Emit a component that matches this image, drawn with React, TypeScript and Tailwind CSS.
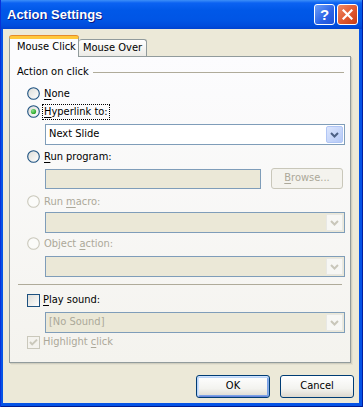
import React from "react";

function Radio({ checked = false, disabled = false }: { checked?: boolean; disabled?: boolean }) {
  return (
    <svg width="13" height="13" viewBox="0 0 13 13" className="shrink-0">
      <defs>
        <linearGradient id="rfill" x1="0" y1="0" x2="1" y2="1">
          <stop offset="0" stopColor="#DCDCD7" />
          <stop offset="1" stopColor="#FFFFFF" />
        </linearGradient>
        <radialGradient id="rdot" cx="0.35" cy="0.35" r="0.7">
          <stop offset="0" stopColor="#8BE28B" />
          <stop offset="1" stopColor="#21A121" />
        </radialGradient>
      </defs>
      <circle cx="6.5" cy="6.5" r="5.8" fill={disabled ? "#FBFBF9" : "url(#rfill)"} stroke={disabled ? "#CAC8BB" : "#1C5180"} strokeWidth="1.1" />
      {checked && <circle cx="6.5" cy="6.5" r="2.6" fill="url(#rdot)" />}
    </svg>
  );
}

function Check({ checked = false, disabled = false }: { checked?: boolean; disabled?: boolean }) {
  return (
    <svg width="13" height="13" viewBox="0 0 13 13" className="shrink-0">
      <defs>
        <linearGradient id="cfill" x1="0" y1="0" x2="1" y2="1">
          <stop offset="0" stopColor="#DCDCD7" />
          <stop offset="1" stopColor="#FFFFFF" />
        </linearGradient>
      </defs>
      <rect x="0.5" y="0.5" width="12" height="12" fill={disabled ? "#F4F3EE" : "url(#cfill)"} stroke={disabled ? "#CAC8BB" : "#1C5180"} />
      {checked && (
        <path d="M3 6 L5.2 8.4 L10 3.6" fill="none" stroke={disabled ? "#CAC8BB" : "#21A121"} strokeWidth="2" />
      )}
    </svg>
  );
}

function Chevron({ disabled = false }: { disabled?: boolean }) {
  return (
    <svg width="9" height="6" viewBox="0 0 9 6">
      <path d="M1 1 L4.5 4.5 L8 1" fill="none" stroke={disabled ? "#C9C7BA" : "#4D6185"} strokeWidth="2" />
    </svg>
  );
}

function Combo({ text, disabled = false }: { text?: string; disabled?: boolean }) {
  return (
    <div
      className={
        "flex h-[21px] items-center border border-[#7F9DB9] " +
        (disabled ? "bg-[#EBE8D7]" : "bg-white")
      }
    >
      <div className={"flex-1 pl-[3px] text-[11px] " + (disabled ? "text-[#ACA899]" : "text-black")}>{text}</div>
      {disabled ? (
        <div className="m-[1px] flex h-[17px] w-[17px] items-center justify-center rounded-[1px] border border-[#E8E8E4] bg-[#F7F7F4]">
          <Chevron disabled />
        </div>
      ) : (
        <div className="m-[1px] flex h-[17px] w-[17px] items-center justify-center rounded-[2px] border border-[#B1C6F5] bg-[linear-gradient(135deg,#DCE6FD,#B5C9F7)]">
          <Chevron />
        </div>
      )}
    </div>
  );
}

function U({ children }: { children: React.ReactNode }) {
  return <span className="underline underline-offset-[2px]">{children}</span>;
}

function RadioRow({
  checked,
  disabled,
  focus,
  children,
  className,
}: {
  checked?: boolean;
  disabled?: boolean;
  focus?: boolean;
  children: React.ReactNode;
  className?: string;
}) {
  return (
    <div className={"flex h-[13px] items-center pl-[17px] " + (className ?? "")}>
      <Radio checked={checked} disabled={disabled} />
      <span
        className={
          "ml-[2px] flex h-[16px] items-center border px-[1px] text-[11px] leading-none " +
          (focus ? "border-dotted border-black " : "border-transparent ") +
          (disabled ? "text-[#ACA899]" : "text-black")
        }
      >
        <span className="whitespace-pre">{children}</span>
      </span>
    </div>
  );
}

export default function App() {
  return (
    <div className="flex h-[407px] w-[363px] flex-col font-['DejaVu_Sans_Condensed','Liberation_Sans',sans-serif] text-[11px]">
      {/* Title bar */}
      <div className="flex h-[29px] shrink-0 items-center bg-[linear-gradient(to_bottom,#3D8FF8_0px,#0B62F2_3px,#0058E8_10px,#0055E5_20px,#004CDC_26px,#0042CF_29px)] pl-[7px] pr-[5px] shadow-[inset_1px_0_0_#0831D9,inset_-1px_0_0_#001EA0]">
        <div className="flex-1 pt-[1px] font-['Liberation_Sans',sans-serif] text-[13px] font-bold text-white [text-shadow:1px_1px_0_#0A1883]">
          Action Settings
        </div>
        <div className="flex gap-[2px]">
          <div className="flex h-[21px] w-[21px] items-center justify-center rounded-[3px] border border-white bg-[linear-gradient(135deg,#6FA0F8,#2A62E6_60%,#1E52D8)] font-['Liberation_Sans',sans-serif] text-[15px] font-bold leading-none text-white">
            ?
          </div>
          <div className="flex h-[21px] w-[21px] items-center justify-center rounded-[3px] border border-white bg-[linear-gradient(135deg,#EE8A66,#E0582F_55%,#C83C14)]">
            <svg width="11" height="11" viewBox="0 0 11 11">
              <path d="M1.5 1.5 L9.5 9.5 M9.5 1.5 L1.5 9.5" stroke="white" strokeWidth="2.2" strokeLinecap="square" />
            </svg>
          </div>
        </div>
      </div>

      {/* Frame + body */}
      <div className="flex flex-1 flex-col bg-[#0553E6] pb-[4px] pl-[3px] pr-[4px] shadow-[inset_1px_0_0_#0831D9,inset_-1px_0_0_#001EA0,inset_0_-1px_0_#001B8F]">
        <div className="flex flex-1 flex-col bg-[#ECE9D8] pl-[6px] pt-[7px]">
          {/* Tabs */}
          <div className="relative z-10 -mb-[1px] flex h-[21px] items-start">
            <div className="flex h-[21px] w-[70px] items-center rounded-t-[3px] border-x border-t-[3px] border-x-[#919B9C] border-t-[#FFC83C] bg-[#FCFCFE] pl-[7px] pb-[2px] text-black shadow-[0_-1px_0_#E68B2C]">
              Mouse Click
            </div>
            <div className="mt-[3px] flex h-[17px] w-[68px] items-center rounded-t-[3px] border-r border-t border-[#919B9C] bg-[linear-gradient(to_bottom,#FFFFFF,#ECEBE6)] pl-[4px] text-black">
              Mouse Over
            </div>
          </div>

          {/* Panel */}
          <div className="flex h-[307px] w-[342px] flex-col border border-[#919B9C] bg-[linear-gradient(to_bottom,#FCFCFE,#F4F3EE)] shadow-[1px_1px_0_#D0CEBF,2px_2px_0_#E3E0D0]">
            {/* Action on click header */}
            <div className="mt-[9px] flex h-[13px] items-center pl-[7px] pr-[6px]">
              <span className="text-black">Action on click</span>
              <div className="ml-[4px] h-[1px] flex-1 bg-[#AFAB9A]" />
            </div>

            <RadioRow className="mt-[8px]">
              <U>N</U>one
            </RadioRow>
            <RadioRow className="mt-[5px]" checked focus>
              <U>H</U>yperlink to:
            </RadioRow>
            <div className="mt-[6px] pl-[35px] pr-[5px]">
              <Combo text="Next Slide" />
            </div>

            <RadioRow className="mt-[5px]">
              <U>R</U>un program:
            </RadioRow>
            <div className="mt-[5px] flex items-center gap-[10px] pl-[35px] pr-[7px]">
              <div className="h-[20px] w-[216px] border border-[#7F9DB9] bg-[#EBE8D7]" />
              <div className="flex h-[21px] flex-1 items-center justify-center rounded-[3px] border border-[#C9C7BA] bg-[#F4F3EE] text-[#ACA899]">
                <span>
                  <U>B</U>rowse...
                </span>
              </div>
            </div>

            <RadioRow className="mt-[6px]" disabled>
              Run <U>m</U>acro:
            </RadioRow>
            <div className="mt-[4px] pl-[35px] pr-[5px]">
              <Combo disabled />
            </div>

            <RadioRow className="mt-[4px]" disabled>
              Object <U>a</U>ction:
            </RadioRow>
            <div className="mt-[6px] pl-[35px] pr-[5px]">
              <Combo disabled />
            </div>

            <div className="mx-[8px] mt-[7px] h-[1px] bg-[#AFAB9A]" />

            <div className="mt-[9px] flex h-[13px] items-center pl-[17px]">
              <Check />
              <span className="ml-[3px] text-black">
                <U>P</U>lay sound:
              </span>
            </div>
            <div className="mt-[5px] pl-[35px] pr-[5px]">
              <Combo text="[No Sound]" disabled />
            </div>
            <div className="mt-[3px] flex h-[13px] items-center pl-[17px]">
              <Check checked disabled />
              <span className="ml-[3px] text-[#ACA899]">
                Highlight <U>c</U>lick
              </span>
            </div>
          </div>

          {/* Buttons */}
          <div className="mt-[12px] flex justify-end gap-[10px] pr-[5px]">
            <div className="flex h-[23px] w-[74px] items-center justify-center rounded-[3px] border border-[#003C74] bg-[linear-gradient(to_bottom,#FFFFFF,#F3F3EF_60%,#DCD8CE)] text-black shadow-[inset_0_1px_0_#CEE3FF,inset_1px_0_0_#BCD4F6,inset_-1px_0_0_#89ADE4,inset_0_-1px_0_#6985D8,inset_0_2px_0_#BCD4F6,inset_2px_0_0_#CEE3FF,inset_-2px_0_0_#7BA2E7,inset_0_-2px_0_#7BA2E7]">
              OK
            </div>
            <div className="flex h-[23px] w-[74px] items-center justify-center rounded-[3px] border border-[#003C74] bg-[linear-gradient(to_bottom,#FFFFFF,#F3F3EF_60%,#DCD8CE)] text-black">
              Cancel
            </div>
          </div>
        </div>
      </div>
    </div>
  );
}
